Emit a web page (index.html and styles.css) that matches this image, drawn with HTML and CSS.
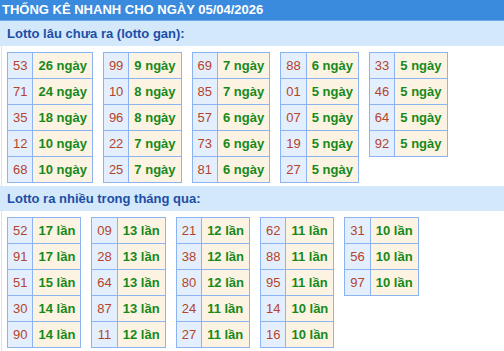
FILE: index.html
```html
<!DOCTYPE html>
<html lang="vi">
<head>
<meta charset="utf-8">
<title>Thống kê nhanh</title>
<link rel="stylesheet" href="styles.css">
</head>
<body>
<div class="box">
  <div class="title">THỐNG KÊ NHANH CHO NGÀY 05/04/2026</div>
  <div class="sub">Lotto lâu chưa ra (lotto gan):</div>
  <div class="grid">
    <table class="lt">
      <tr><td class="n">53</td><td class="v">26 ngày</td></tr>
      <tr><td class="n">71</td><td class="v">24 ngày</td></tr>
      <tr><td class="n">35</td><td class="v">18 ngày</td></tr>
      <tr><td class="n">12</td><td class="v">10 ngày</td></tr>
      <tr><td class="n">68</td><td class="v">10 ngày</td></tr>
    </table>
    <table class="lt">
      <tr><td class="n">99</td><td class="v">9 ngày</td></tr>
      <tr><td class="n">10</td><td class="v">8 ngày</td></tr>
      <tr><td class="n">96</td><td class="v">8 ngày</td></tr>
      <tr><td class="n">22</td><td class="v">7 ngày</td></tr>
      <tr><td class="n">25</td><td class="v">7 ngày</td></tr>
    </table>
    <table class="lt">
      <tr><td class="n">69</td><td class="v">7 ngày</td></tr>
      <tr><td class="n">85</td><td class="v">7 ngày</td></tr>
      <tr><td class="n">57</td><td class="v">6 ngày</td></tr>
      <tr><td class="n">73</td><td class="v">6 ngày</td></tr>
      <tr><td class="n">81</td><td class="v">6 ngày</td></tr>
    </table>
    <table class="lt">
      <tr><td class="n">88</td><td class="v">6 ngày</td></tr>
      <tr><td class="n">01</td><td class="v">5 ngày</td></tr>
      <tr><td class="n">07</td><td class="v">5 ngày</td></tr>
      <tr><td class="n">19</td><td class="v">5 ngày</td></tr>
      <tr><td class="n">27</td><td class="v">5 ngày</td></tr>
    </table>
    <table class="lt">
      <tr><td class="n">33</td><td class="v">5 ngày</td></tr>
      <tr><td class="n">46</td><td class="v">5 ngày</td></tr>
      <tr><td class="n">64</td><td class="v">5 ngày</td></tr>
      <tr><td class="n">92</td><td class="v">5 ngày</td></tr>
    </table>
  </div>
  <div class="sub">Lotto ra nhiều trong tháng qua:</div>
  <div class="grid">
    <table class="lt">
      <tr><td class="n">52</td><td class="v">17 lần</td></tr>
      <tr><td class="n">91</td><td class="v">17 lần</td></tr>
      <tr><td class="n">51</td><td class="v">15 lần</td></tr>
      <tr><td class="n">30</td><td class="v">14 lần</td></tr>
      <tr><td class="n">90</td><td class="v">14 lần</td></tr>
    </table>
    <table class="lt">
      <tr><td class="n">09</td><td class="v">13 lần</td></tr>
      <tr><td class="n">28</td><td class="v">13 lần</td></tr>
      <tr><td class="n">64</td><td class="v">13 lần</td></tr>
      <tr><td class="n">87</td><td class="v">13 lần</td></tr>
      <tr><td class="n">11</td><td class="v">12 lần</td></tr>
    </table>
    <table class="lt">
      <tr><td class="n">21</td><td class="v">12 lần</td></tr>
      <tr><td class="n">38</td><td class="v">12 lần</td></tr>
      <tr><td class="n">80</td><td class="v">12 lần</td></tr>
      <tr><td class="n">24</td><td class="v">11 lần</td></tr>
      <tr><td class="n">27</td><td class="v">11 lần</td></tr>
    </table>
    <table class="lt">
      <tr><td class="n">62</td><td class="v">11 lần</td></tr>
      <tr><td class="n">88</td><td class="v">11 lần</td></tr>
      <tr><td class="n">95</td><td class="v">11 lần</td></tr>
      <tr><td class="n">14</td><td class="v">10 lần</td></tr>
      <tr><td class="n">16</td><td class="v">10 lần</td></tr>
    </table>
    <table class="lt">
      <tr><td class="n">31</td><td class="v">10 lần</td></tr>
      <tr><td class="n">56</td><td class="v">10 lần</td></tr>
      <tr><td class="n">97</td><td class="v">10 lần</td></tr>
    </table>
  </div>
</div>
</body>
</html>
```

FILE: styles.css
```css
html, body {
  margin: 0;
  padding: 0;
  background: #ffffff;
}

body {
  font-family: "Liberation Sans", Arial, sans-serif;
  font-size: 13px;
}

.box {
  width: 504px;
}

.title {
  background: #3a8ade;
  color: #ffffff;
  font-weight: bold;
  line-height: 20px;
  height: 20px;
  padding-left: 2px;
  border-bottom: 1px solid #6fa9e6;
  white-space: nowrap;
}

.sub {
  background: #d4e8fb;
  color: #1d4ea6;
  font-weight: bold;
  font-size: 13px;
  line-height: 25px;
  height: 25px;
  padding-left: 7px;
}

.grid {
  display: flex;
  align-items: flex-start;
  gap: 10px;
  margin-left: 1px;
  border-left: 1px solid #e2e2e2;
  padding: 6px 0 3px 5px;
}

.lt {
  border-collapse: collapse;
  flex: none;
}

.lt td {
  border: 1px solid #8cb4f3;
  height: 25px;
  line-height: 25px;
  white-space: nowrap;
  font-size: 13px;
  padding: 0 5px;
}

.lt .n {
  background: #e3effd;
  color: #b4432c;
  text-align: center;
}

.lt .v {
  background: #fdf3e2;
  color: #17891b;
  font-weight: bold;
}
```
